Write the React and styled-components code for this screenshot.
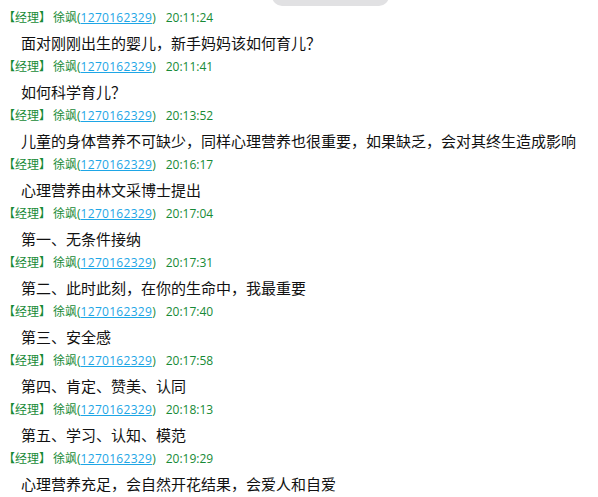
import React from 'react';
import styled, { createGlobalStyle } from 'styled-components';

const Global = createGlobalStyle`
    body {
        margin: 0;
        background: #fff;
        font-family: "Microsoft YaHei", "Noto Sans CJK SC", "Noto Sans", sans-serif;
    }
`

const Page = styled.div`
    position: relative;
    width: 598px;
    height: 497px;
    overflow: hidden;
    padding-top: 8px;
    box-sizing: border-box;
`

const MorePill = styled.div`
    position: absolute;
    top: -20px;
    left: 272px;
    width: 117px;
    height: 26px;
    border-radius: 10px;
    background: #e1e1e3;
`

const Item = styled.div`
    display: flex;
    flex-direction: column;
`

const Header = styled.div`
    display: flex;
    align-items: center;
    height: 18px;
    padding-left: 3px;
    font-family: "Open Sans", "Noto Sans CJK SC", sans-serif;
    font-size: 12px;
    color: #178a36;
    white-space: nowrap;
`

const Name = styled.span`
    margin-left: 2px;
`

const Qq = styled.a`
    color: #1ea6e6;
    text-decoration: underline;
    letter-spacing: 0.3px;
`

const Time = styled.span`
    margin-left: 10px;
`

const Message = styled.div`
    padding: 4px 0 1px 21px;
    line-height: 26px;
    font-size: 15px;
    color: #111;
    white-space: nowrap;
`

const messages = [
    ['20:11:24', '面对刚刚出生的婴儿，新手妈妈该如何育儿？'],
    ['20:11:41', '如何科学育儿？'],
    ['20:13:52', '儿童的身体营养不可缺少，同样心理营养也很重要，如果缺乏，会对其终生造成影响'],
    ['20:16:17', '心理营养由林文采博士提出'],
    ['20:17:04', '第一、无条件接纳'],
    ['20:17:31', '第二、此时此刻，在你的生命中，我最重要'],
    ['20:17:40', '第三、安全感'],
    ['20:17:58', '第四、肯定、赞美、认同'],
    ['20:18:13', '第五、学习、认知、模范'],
    ['20:19:29', '心理营养充足，会自然开花结果，会爱人和自爱'],
]

const App = () => {
    return (
        <Page>
            <Global />
            <MorePill />
            {messages.map(([time, text], i) => (
                <Item key={i}>
                    <Header>
                        【经理】<Name>徐飒(<Qq>1270162329</Qq>)</Name>
                        <Time>{time}</Time>
                    </Header>
                    <Message>{text}</Message>
                </Item>
            ))}
        </Page>
    );
}

export default App;
